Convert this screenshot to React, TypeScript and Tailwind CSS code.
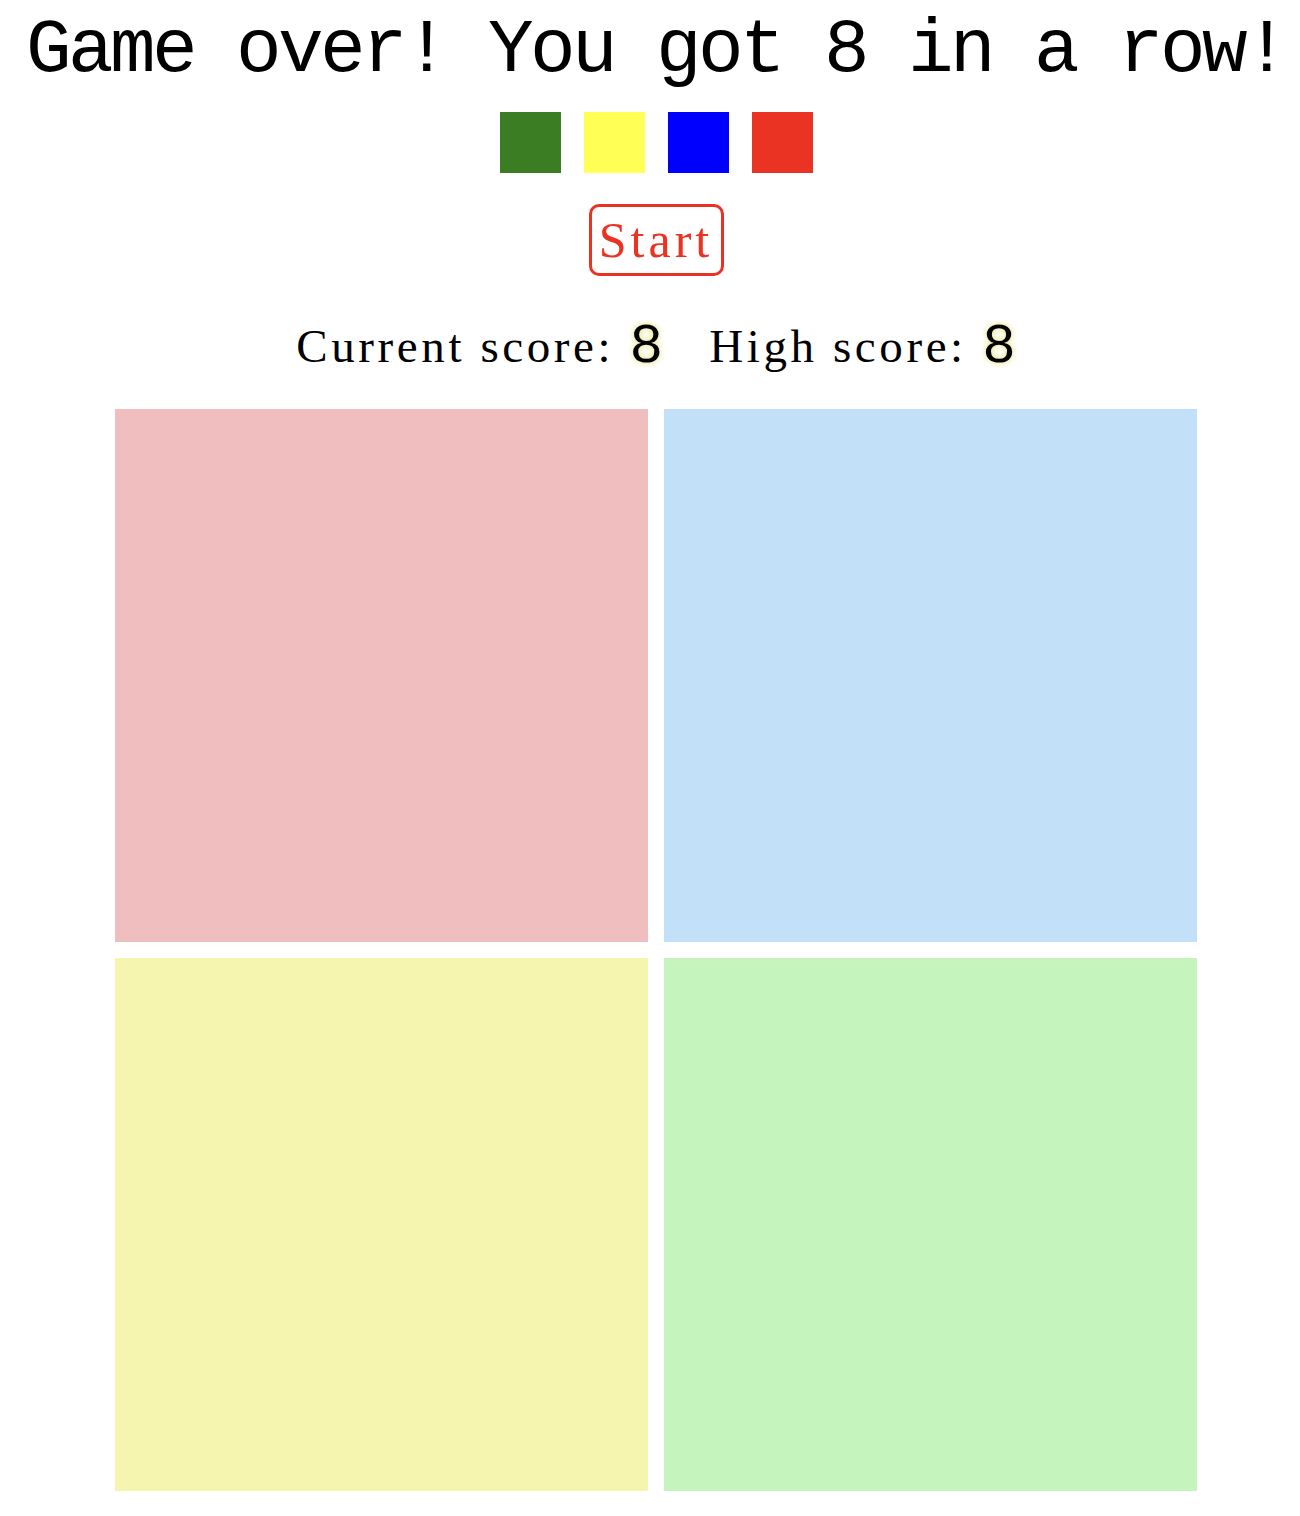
export default function App() {
  const swatches = ["bg-[#3a7d22]", "bg-[#ffff55]", "bg-[#0000ff]", "bg-[#eb3323]"];
  const pads = ["bg-[#f0bebe]", "bg-[#c2e0f8]", "bg-[#f5f5b0]", "bg-[#c5f5bd]"];

  return (
    <div className="min-h-screen bg-white pl-3 flex flex-col items-center">
      <h1
        className="mt-[6px] text-[76px] leading-[90px] tracking-[-3.6px] text-black whitespace-nowrap"
        style={{ fontFamily: '"Liberation Mono", monospace' }}>
        Game over! You got 8 in a row!
      </h1>

      <div className="mt-[16px] flex gap-[23px]">
        {swatches.map((c) => (
          <div key={c} className={`w-[61px] h-[61px] ${c}`} />
        ))}
      </div>

      <button
        className="mt-[31px] w-[135px] h-[72px] rounded-[10px] border-[3px] border-[#eb3323] text-[#eb3323] text-[50px] leading-none tracking-[4px]"
        style={{ fontFamily: '"Liberation Serif", serif' }}>
        Start
      </button>

      <div
        className="mt-[42px] flex items-baseline gap-[46px] text-[47px] leading-[56px] tracking-[3.6px] text-black"
        style={{ fontFamily: '"Liberation Serif", serif' }}>
        <span>
          Current score:{" "}
          <span
            className="text-[56px] font-light tracking-normal"
            style={{ fontFamily: '"Liberation Mono", monospace', textShadow: "0 0 6px #dede6a" }}>
            8
          </span>
        </span>
        <span>
          High score:{" "}
          <span
            className="text-[56px] font-light tracking-normal"
            style={{ fontFamily: '"Liberation Mono", monospace', textShadow: "0 0 6px #dede6a" }}>
            8
          </span>
        </span>
      </div>

      <div className="mt-[34px] grid grid-cols-2 gap-4 w-[1082px] pb-[26px]">
        {pads.map((c) => (
          <div key={c} className={`h-[533px] ${c}`} />
        ))}
      </div>
    </div>
  );
}
